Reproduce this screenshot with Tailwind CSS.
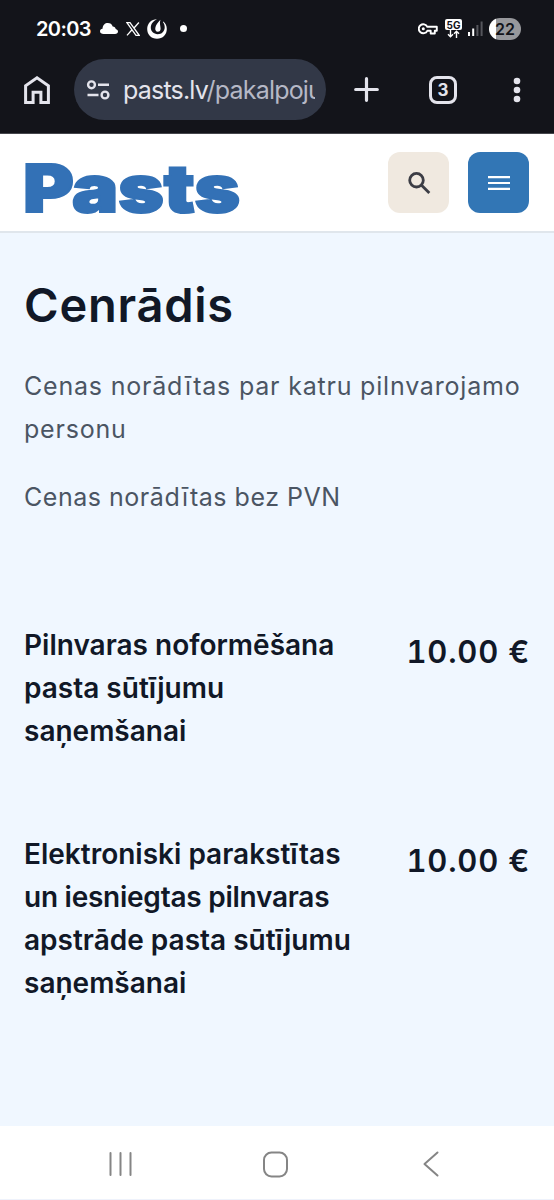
<!DOCTYPE html>
<html lang="lv">
<head>
    <meta charset="UTF-8">
    <meta name="viewport" content="width=device-width, initial-scale=1.0">
    <title>Cenrādis - Pasts</title>
    <script src="https://cdn.jsdelivr.net/npm/@tailwindcss/browser@4"></script>
</head>
<body class="bg-[#f0f7ff] font-['Inter',sans-serif] text-[#111827]">
    <div class="flex h-[1200px] w-[554px] flex-col overflow-hidden">

        <!-- Status bar -->
        <div class="flex h-[57px] shrink-0 items-center bg-[#13141a] pl-9 pr-[33px] text-white">
            <span class="w-[54px] text-[20px] font-semibold leading-none tracking-[-0.6px] whitespace-nowrap">20:03</span>
            <svg class="ml-[10px]" width="18" height="11" viewBox="0 0 18 11" fill="currentColor"><path d="M3.600 11C1.600 11 0 10 0 8.300 0 6.800 1 5.900 2.500 5.700 2.800 2 5 0 7.800 0c2.400 0 4.200 1.200 4.900 3.400C14.500 3.500 15.500 4.500 15.700 6.100 17.200 6.500 18 7.400 18 8.600 18 10 16.800 11 15 11Z"/></svg>
            <svg class="ml-2" width="14" height="14" viewBox="0 0 14 14" fill="none" stroke="currentColor"><path d="M.9.700h3.100l9.200 12.600h-3.200ZM12.900.5 7.800 6.200M6 7.800 1 13.400" stroke-width="1.300"/></svg>
            <svg class="ml-[6px]" width="22" height="22" viewBox="0 0 22 22" fill="currentColor"><path d="M11 1.200C5.200 1.200 1.200 5.400 1.200 11c0 5.700 4.100 9.800 9.800 9.800s9.800-4.200 9.800-9.800c0-3.300-1.200-5.700-3.500-7.600l-.4.5c1.200 1.700 1.800 3.300 1.800 5.300 0 4.200-3 7-7 7s-6.900-2.700-6.900-6.600c0-3.800 2.400-6.700 6.200-8.400Z"/><path d="M14.400 1.800c-2.500 2.700-4.700 5.200-5.100 8.300-.3 2 .6 3.700 2.400 3.700 2 0 3-1.300 2.900-3.300C14.500 8 13.300 5.600 14.400 1.800Z"/></svg>
            <span class="ml-3 size-[7px] rounded-full bg-white"></span>

            <svg class="ml-auto" width="20" height="14" viewBox="0 0 20 14" fill="none" stroke="currentColor" stroke-width="1.900"><path d="M9.300 4.800H18.800V8.800H16.800V11.500H12.700V8.800H9.300A4.500 4.500 0 1 1 9.300 4.800Z" stroke-linejoin="round"/><circle cx="5.300" cy="6.800" r="1.500" fill="currentColor" stroke="none"/></svg>
            <div class="ml-[7px] flex w-[17px] flex-col items-center">
                <span class="flex h-[11px] w-full items-center justify-center rounded-[2px] bg-white text-[10px] font-bold leading-none text-[#13141a]">5G</span>
                <svg width="13" height="8" viewBox="0 0 13 8" fill="none" stroke="currentColor" stroke-width="1.400"><path d="M3.500 0v6.500M1 4.300l2.500 2.500L6 4.300M9.500 8v-6.500M7 3.700l2.500-2.500L12 3.700"/></svg>
            </div>
            <svg class="ml-[6px]" width="15" height="15" viewBox="0 0 15 15"><path d="M0 11h2v4H0ZM4.200 7.500h2V15h-2Z" fill="#fff"/><path d="M8.400 4h2v11h-2ZM12.600.5h2V15h-2Z" fill="#55565c"/></svg>
            <span class="ml-[6px] flex h-[22px] w-[32px] items-center justify-center overflow-hidden rounded-full bg-linear-to-r from-white from-22% to-[#97989c] to-22% text-[16px] font-semibold leading-none text-[#13141a]">22</span>
        </div>

        <!-- Browser toolbar -->
        <div class="flex h-[77px] shrink-0 items-start border-b border-[#45464c] bg-[#13141a] pt-[2px] text-[#e4e4ec]">
            <div class="flex h-[61px] w-full items-center pl-6">
                <svg width="26" height="28" viewBox="0 0 26 28" fill="none" stroke="currentColor" stroke-width="3"><path d="M1.600 26.500V9.700L13 1.800 24.400 9.700V26.500H16.900V16.200H9.100V26.500Z"/></svg>
                <div class="ml-6 flex h-full w-[252px] items-center rounded-full bg-[#323847] pl-3">
                    <svg class="shrink-0" width="24" height="20" viewBox="0 0 24 20" fill="none" stroke="currentColor" stroke-width="2.400"><circle cx="5.500" cy="4.800" r="3.400"/><circle cx="19" cy="15" r="3.400"/><path d="M12 4.800h11M1.500 15h11"/></svg>
                    <div class="ml-[13px] w-[192px] overflow-hidden text-[25px] leading-[36px] tracking-[-0.8px] whitespace-nowrap">pasts.lv<span class="text-[#b6b8c6]">/pakalpoju</span></div>
                </div>
                <svg class="ml-7" width="25" height="25" viewBox="0 0 25 25" stroke="currentColor" stroke-width="3.200" stroke-linecap="round"><path d="M12.500 1.700v21.600M1.700 12.500h21.600"/></svg>
                <div class="ml-[50px] flex size-7 items-center justify-center rounded-[8px] border-[3px] border-[#e4e4ec] pt-px text-[17px] font-bold leading-none">3</div>
                <svg class="ml-[56px]" width="8" height="26" viewBox="0 0 8 26" fill="currentColor"><circle cx="4" cy="4" r="3.300"/><circle cx="4" cy="13" r="3.300"/><circle cx="4" cy="22" r="3.300"/></svg>
            </div>
        </div>

        <!-- Site header -->
        <header class="flex h-[99px] shrink-0 items-center border-b-2 border-[#e0e6ec] bg-white pl-6 pr-[25px]">
            <svg class="overflow-visible text-[#3371b6]" width="216" height="60" viewBox="0 0 216 60" role="img" aria-label="Pasts">
                <text class="font-['Inter',sans-serif] text-[66px] font-black" x="-1" y="59" textLength="217" lengthAdjust="spacingAndGlyphs" fill="currentColor" stroke="currentColor" stroke-width="2">Pasts</text>
            </svg>
            <button class="ml-auto flex size-[61px] items-center justify-center rounded-[12px] bg-[#f0e9e0] text-[#3c3d45]">
                <svg width="24" height="24" viewBox="0 0 24 24" fill="none" stroke="currentColor" stroke-width="2.800"><circle cx="9.500" cy="9.200" r="6.800"/><path d="M14.300 14 22.300 22"/></svg>
            </button>
            <button class="ml-[19px] flex size-[61px] items-center justify-center rounded-[12px] bg-[#3276b5] text-white">
                <svg width="22" height="16" viewBox="0 0 22 16" fill="currentColor"><path d="M0 1h22v2.200H0ZM0 6.900h22v2.200H0ZM0 12.800h22V15H0Z"/></svg>
            </button>
        </header>

        <!-- Price list -->
        <main class="grow bg-[#f0f7ff] px-6 pt-[43px]">
            <h1 class="text-[47px] font-semibold leading-[58px] tracking-[0.75px] whitespace-nowrap">Cenrādis</h1>
            <div class="mt-[31px] text-[25px] leading-[43px] tracking-[0.8px] text-[#4b5563]">
                <p class="whitespace-nowrap">Cenas norādītas par katru pilnvarojamo<br>personu</p>
                <p class="mt-[25px] tracking-[0.53px]">Cenas norādītas bez PVN</p>
            </div>

            <div class="mt-[105px] flex justify-between">
                <h2 class="text-[28px] font-semibold leading-[43px] tracking-[0px] whitespace-nowrap">Pilnvaras noformēšana<br>pasta sūtījumu<br>saņemšanai</h2>
                <span class="mt-[6px] text-[31px] font-semibold leading-[43px] tracking-[0.8px] tabular-nums whitespace-nowrap">10.00 €</span>
            </div>
            <div class="mt-20 flex justify-between">
                <h2 class="text-[28px] font-semibold leading-[43px] tracking-[0px] whitespace-nowrap">Elektroniski parakstītas<br><span class="tracking-[-0.25px]">un iesniegtas pilnvaras</span><br>apstrāde pasta sūtījumu<br>saņemšanai</h2>
                <span class="mt-[6px] text-[31px] font-semibold leading-[43px] tracking-[0.8px] tabular-nums whitespace-nowrap">10.00 €</span>
            </div>
        </main>

        <!-- System navigation -->
        <nav class="flex h-[74px] shrink-0 items-center border-b border-[#eef2fb] bg-white pl-[109px] pt-[3px] text-[#858585]">
            <svg width="23" height="26" viewBox="0 0 23 26" stroke="currentColor" stroke-width="2" stroke-linecap="round"><path d="M1.500 2v22M11.500 2v22M21.500 2v22"/></svg>
            <svg class="ml-[131px]" width="25" height="27" viewBox="0 0 25 27" fill="none" stroke="currentColor" stroke-width="2"><rect x="1" y="1.500" width="23" height="24" rx="7.500"/></svg>
            <svg class="ml-[135px]" width="16" height="26" viewBox="0 0 16 26" fill="none" stroke="currentColor" stroke-width="2" stroke-linecap="round" stroke-linejoin="round"><path d="M14.500 1.500 1.500 13 14.500 24.500"/></svg>
        </nav>
    </div>
</body>
</html>
